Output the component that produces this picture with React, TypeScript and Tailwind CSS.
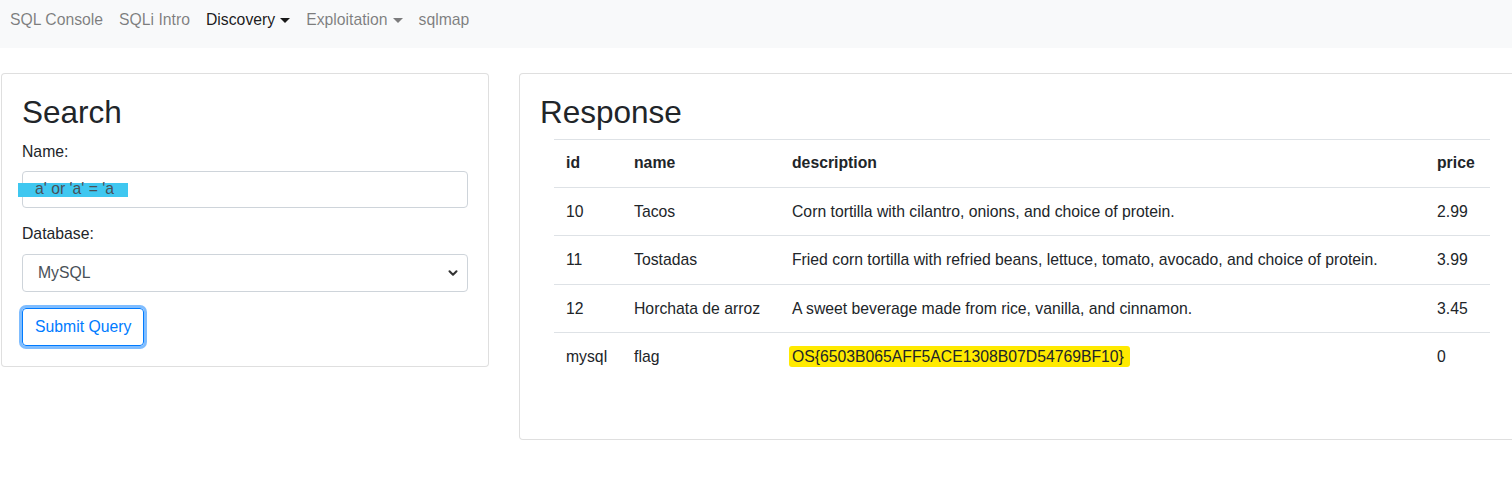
import { ChevronDown } from 'lucide-react'

type Row = {
  id: string
  name: string
  description: string
  price: string
  flag?: boolean
}

const rows: Row[] = [
  { id: '10', name: 'Tacos', description: 'Corn tortilla with cilantro, onions, and choice of protein.', price: '2.99' },
  {
    id: '11',
    name: 'Tostadas',
    description: 'Fried corn tortilla with refried beans, lettuce, tomato, avocado, and choice of protein.',
    price: '3.99',
  },
  { id: '12', name: 'Horchata de arroz', description: 'A sweet beverage made from rice, vanilla, and cinnamon.', price: '3.45' },
  { id: 'mysql', name: 'flag', description: 'OS{6503B065AFF5ACE1308B07D54769BF10}', price: '0', flag: true },
]

function NavBar() {
  return (
    <nav className="flex h-12 items-start bg-[#f8f9fa] px-[2px] pt-2 leading-6">
      <a className="px-2 text-[rgba(0,0,0,0.5)]">SQL Console</a>
      <a className="px-2 text-[rgba(0,0,0,0.5)]">SQLi Intro</a>
      <a className="flex items-center px-2 text-[rgba(0,0,0,0.9)]">
        Discovery
        <span className="ml-[5px] mt-[1px] h-0 w-0 border-x-[5px] border-t-[5px] border-x-transparent border-t-[rgba(0,0,0,0.9)]" />
      </a>
      <a className="flex items-center px-2 text-[rgba(0,0,0,0.5)]">
        Exploitation
        <span className="ml-[5px] mt-[1px] h-0 w-0 border-x-[5px] border-t-[5px] border-x-transparent border-t-[rgba(0,0,0,0.5)]" />
      </a>
      <a className="px-2 text-[rgba(0,0,0,0.5)]">sqlmap</a>
    </nav>
  )
}

function SearchCard() {
  return (
    <section className="w-[488px] shrink-0 self-start rounded border border-[rgba(0,0,0,0.125)] bg-white p-5">
      <h2 className="mb-2 text-[31.5px] font-normal leading-[1.2]">Search</h2>
      <label className="mb-[7px] block leading-6">Name:</label>
      <div className="relative mb-[14px] h-[37px] rounded border border-[#ced4da] bg-white">
        <span className="absolute left-[-5px] top-[11px] h-[14px] w-[110px] bg-[#3fc7f0]" />
        <span className="relative block px-3 pt-[5px] leading-6 text-[#495057]">a' or 'a' = 'a</span>
      </div>
      <label className="mb-2 block leading-6">Database:</label>
      <div className="mb-4 flex h-[38px] items-center justify-between rounded border border-[#ced4da] bg-white pl-[15px] pr-[7px] text-[#495057]">
        <span className="leading-6">MySQL</span>
        <ChevronDown size={14} strokeWidth={3.5} className="text-[#333]" />
      </div>
      <button className="h-[38px] rounded border border-[#007bff] px-3 leading-6 text-[#007bff] shadow-[0_0_0_3px_rgba(0,123,255,0.5)]">
        Submit Query
      </button>
    </section>
  )
}

function ResponseCard() {
  return (
    <section className="w-[1006px] shrink-0 rounded border border-[rgba(0,0,0,0.125)] bg-white p-5">
      <h2 className="mb-[7px] text-[31.5px] font-normal leading-[1.2]">Response</h2>
      <table className="mb-[38px] ml-[14px] w-[936px] table-fixed border-collapse text-left">
        <thead>
          <tr>
            <th className="w-[68px] border-t border-[#dee2e6] px-3 py-[11.5px] font-bold leading-6">id</th>
            <th className="w-[158px] border-t border-[#dee2e6] px-3 py-[11.5px] font-bold leading-6">name</th>
            <th className="w-[645px] border-t border-[#dee2e6] px-3 py-[11.5px] font-bold leading-6">description</th>
            <th className="border-t border-[#dee2e6] px-3 py-[11.5px] font-bold leading-6">price</th>
          </tr>
        </thead>
        <tbody>
          {rows.map((row) => (
            <tr key={row.id}>
              <td className="border-t border-[#dee2e6] px-3 py-[11.75px] leading-6">{row.id}</td>
              <td className="border-t border-[#dee2e6] px-3 py-[11.75px] leading-6">{row.name}</td>
              <td className="whitespace-nowrap border-t border-[#dee2e6] px-3 py-[11.75px] leading-6">
                {row.flag ? (
                  <span className="-ml-[3px] inline-block rounded-[3px] bg-[#ffea00] pl-[3px] pr-[6px] leading-[21px]">
                    {row.description}
                  </span>
                ) : (
                  row.description
                )}
              </td>
              <td className="border-t border-[#dee2e6] px-3 py-[11.75px] leading-6">{row.price}</td>
            </tr>
          ))}
        </tbody>
      </table>
    </section>
  )
}

export default function App() {
  return (
    <div className="h-[491px] w-[1512px] overflow-hidden bg-white font-['Liberation_Sans',Arial,sans-serif] text-[15.75px] text-[#212529]">
      <NavBar />
      <main className="flex gap-[30px] pl-[1px] pt-[25px]">
        <SearchCard />
        <ResponseCard />
      </main>
    </div>
  )
}
